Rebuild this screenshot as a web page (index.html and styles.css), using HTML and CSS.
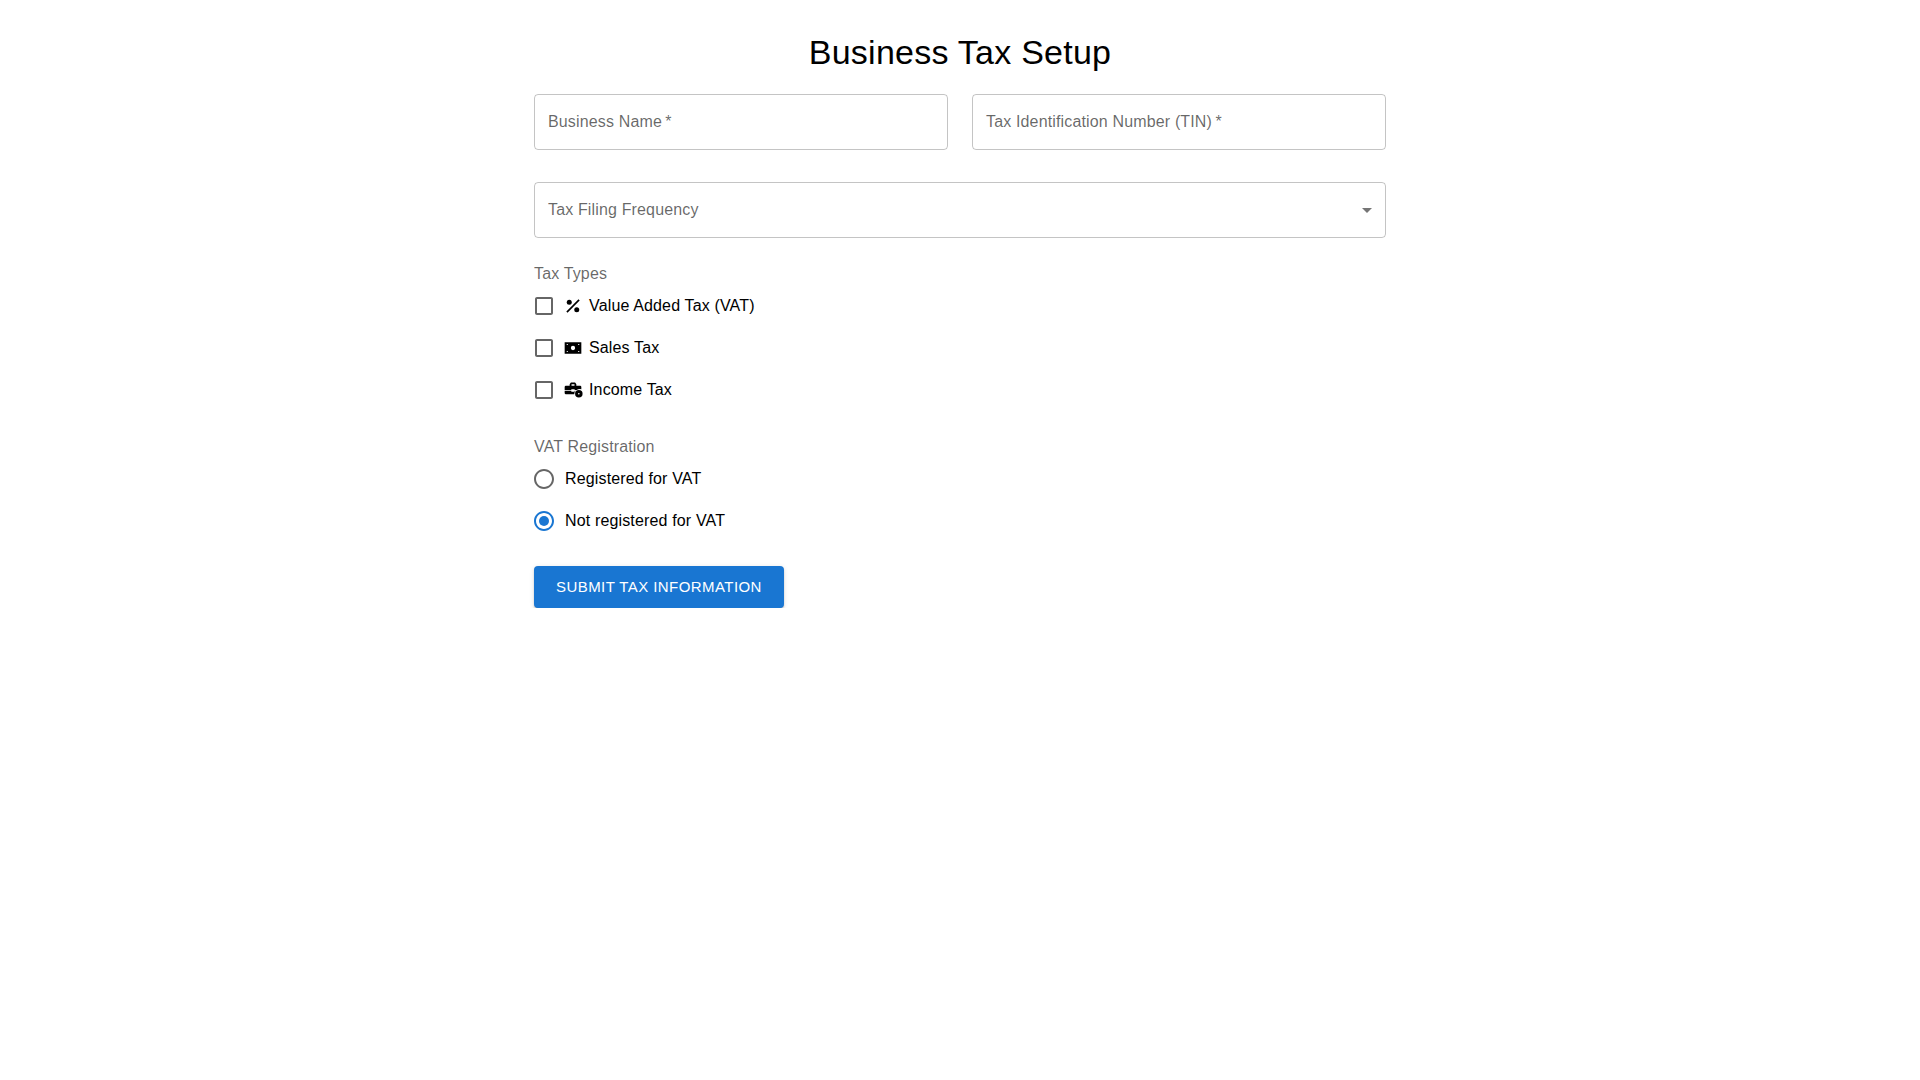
FILE: index.html
```html
<!DOCTYPE html>
<html lang="en">
<head>
<meta charset="utf-8">
<title>Business Tax Setup</title>
<link rel="stylesheet" href="styles.css">
</head>
<body>
<main class="container">
  <h1 class="title">Business Tax Setup</h1>
  <form class="form">
    <div class="row">
      <div class="field"><span class="field-label">Business Name&#8201;*</span></div>
      <div class="field"><span class="field-label">Tax Identification Number (TIN)&#8201;*</span></div>
    </div>
    <div class="field select">
      <span class="field-label">Tax Filing Frequency</span>
      <svg class="arrow" viewBox="0 0 24 24"><path d="M7 10l5 5 5-5z"/></svg>
    </div>
    <fieldset class="group types">
      <div class="legend">Tax Types</div>
      <div class="option">
        <span class="control"><svg viewBox="0 0 24 24"><path class="grey" d="M19 5v14H5V5h14m0-2H5c-1.1 0-2 .9-2 2v14c0 1.1.9 2 2 2h14c1.1 0 2-.9 2-2V5c0-1.1-.9-2-2-2z"/></svg></span>
        <svg class="icon" viewBox="0 0 24 24"><circle cx="7.500" cy="7.500" r="3"/><circle cx="16.500" cy="16.500" r="3"/><path d="M5.410 20 4 18.590 18.590 4 20 5.410z"/></svg>
        <span class="option-text">Value Added Tax (VAT)</span>
      </div>
      <div class="option">
        <span class="control"><svg viewBox="0 0 24 24"><path class="grey" d="M19 5v14H5V5h14m0-2H5c-1.1 0-2 .9-2 2v14c0 1.1.9 2 2 2h14c1.1 0 2-.9 2-2V5c0-1.1-.9-2-2-2z"/></svg></span>
        <svg class="icon" viewBox="0 0 24 24"><path fill-rule="evenodd" d="M2 5h20v14H2zM12 9.400a2.600 2.600 0 1 0 0 5.200 2.600 2.600 0 0 0 0-5.200zM4.500 7.200v1.300h1.300V7.200zM18.200 7.200v1.300h1.300V7.200zM4.500 15.500v1.300h1.300v-1.300zM18.200 15.500v1.300h1.300v-1.300z"/></svg>
        <span class="option-text">Sales Tax</span>
      </div>
      <div class="option">
        <span class="control"><svg viewBox="0 0 24 24"><path class="grey" d="M19 5v14H5V5h14m0-2H5c-1.1 0-2 .9-2 2v14c0 1.1.9 2 2 2h14c1.1 0 2-.9 2-2V5c0-1.1-.9-2-2-2z"/></svg></span>
        <svg class="icon" viewBox="0 0 24 24"><path d="M2 12.800h8v1.400h4v-1.400h1a6 6 0 0 0-1.500 4.200H3.500A1.500 1.500 0 0 1 2 15.500zM3.500 7H8V5l1.500-2h5L16 5v2h4.500A1.500 1.500 0 0 1 22 8.500V11a6 6 0 0 0-5.500 1H14v-1h-4v1H2V8.500A1.500 1.500 0 0 1 3.500 7zM10.200 7h3.600V5.200h-3.600z"/><path fill-rule="evenodd" d="M19 12a4.500 4.500 0 1 0 0 9 4.500 4.500 0 0 0 0-9zm0 3.500a1 1 0 1 1 0 2 1 1 0 0 1 0-2z"/></svg>
        <span class="option-text">Income Tax</span>
      </div>
    </fieldset>
    <fieldset class="group vat">
      <div class="legend">VAT Registration</div>
      <div class="option">
        <span class="control"><svg viewBox="0 0 24 24"><path class="grey" d="M12 2C6.480 2 2 6.480 2 12s4.480 10 10 10 10-4.480 10-10S17.520 2 12 2zm0 18c-4.420 0-8-3.580-8-8s3.580-8 8-8 8 3.580 8 8-3.580 8-8 8z"/></svg></span>
        <span class="option-text">Registered for VAT</span>
      </div>
      <div class="option">
        <span class="control"><svg viewBox="0 0 24 24"><path class="blue" d="M12 2C6.480 2 2 6.480 2 12s4.480 10 10 10 10-4.480 10-10S17.520 2 12 2zm0 18c-4.420 0-8-3.580-8-8s3.580-8 8-8 8 3.580 8 8-3.580 8-8 8z"/><circle class="blue" cx="12" cy="12" r="5"/></svg></span>
        <span class="option-text">Not registered for VAT</span>
      </div>
    </fieldset>
    <button class="submit" type="button">Submit Tax Information</button>
  </form>
</main>
</body>
</html>
```
FILE: styles.css
```css
* { box-sizing: border-box; }
html, body { margin: 0; padding: 0; background: #fff; }
body { font-family: "Liberation Sans", Arial, sans-serif; color: rgba(0,0,0,.87); }
.container { width: 900px; margin: 0 auto; padding: 31px 24px 0; }
.title { margin: 0 0 21px; font-size: 34px; font-weight: 400; line-height: 42px; text-align: center; color: #000; letter-spacing: .25px; }
.form { display: flex; flex-direction: column; }
.row { display: flex; gap: 24px; margin-bottom: 32px; }
.field { flex: 1; height: 56px; display: flex; align-items: center; padding: 0 13px; border: 1px solid rgba(0,0,0,.23); border-radius: 4px; }
.select { flex: none; justify-content: space-between; padding-right: 6px; margin-bottom: 24px; }
.field-label { font-size: 16px; line-height: 24px; color: rgba(0,0,0,.6); letter-spacing: .15px; }
.arrow { width: 24px; height: 24px; fill: rgba(0,0,0,.54); display: block; }
.group { border: 0; margin: 0; padding: 0; }
.types { margin-bottom: 24px; }
.vat { margin-bottom: 24px; }
.legend { font-size: 16px; line-height: 23px; letter-spacing: .15px; color: rgba(0,0,0,.6); }
.option { display: flex; align-items: center; height: 42px; margin-left: -11px; }
.control { width: 42px; height: 42px; padding: 9px; flex: none; }
.control svg { width: 24px; height: 24px; display: block; }
.grey { fill: rgba(0,0,0,.6); }
.blue { fill: #1976d2; }
.icon { width: 20px; height: 20px; flex: none; margin: 0 6px 0 -2px; fill: #000; }
.option-text { font-size: 16px; line-height: 24px; letter-spacing: .15px; color: #000; }
.submit { align-self: flex-start; height: 42px; padding: 0 22px; border: 0; border-radius: 4px; background: #1976d2; color: #fff; font: 500 15px/26px "Liberation Sans", Arial, sans-serif; letter-spacing: .43px; text-transform: uppercase; box-shadow: 0 3px 1px -2px rgba(0,0,0,.2), 0 2px 2px 0 rgba(0,0,0,.14), 0 1px 5px 0 rgba(0,0,0,.12); }
```
